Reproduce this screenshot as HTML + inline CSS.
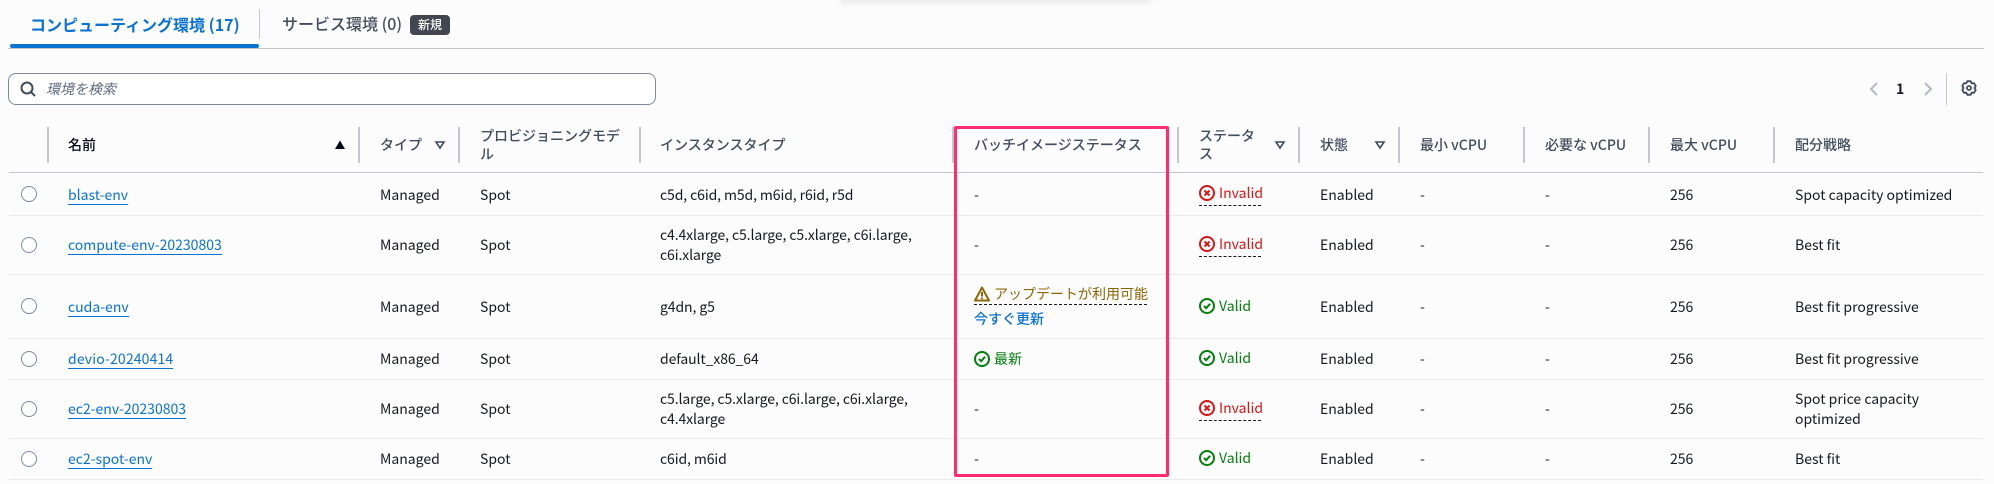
<!DOCTYPE html>
<html lang="ja">
<head>
<meta charset="utf-8">
<title>コンピューティング環境</title>
<style>
html,body{margin:0;padding:0;background:#fcfcfc}
body{position:relative;width:1994px;height:484px;overflow:hidden;font-family:"Noto Sans CJK JP","Liberation Sans",sans-serif;font-size:14px;color:#16191f}
.a,.t,.h,.l,.hr,.sep{position:absolute}
.t{line-height:22px;white-space:nowrap}
.i{line-height:20px;letter-spacing:-.1px}
.h{line-height:18px;white-space:nowrap;color:#414d5c;font-weight:500;font-size:14px}
.l{line-height:18px;white-space:nowrap;color:#0972d3;border-bottom:1px solid #0972d3}
.hr{left:9px;width:1974px;height:1px;background:#e9ebed}
.sep{top:127px;width:2px;height:36px;background:#c6c6cd}
.r{position:absolute;left:21px;width:14px;height:14px;border:1px solid #7d8998;border-radius:50%;background:#fff}
svg{position:absolute;overflow:visible;fill:none}
.neg{color:#d91515}.pos{color:#037f0c}
.d{position:absolute;height:0;border-bottom:1px dashed #16191f}
</style>
</head>
<body>
<div class="a" style="left:840px;top:-8px;width:310px;height:8px;background:#fcfcfc;box-shadow:0 2px 8px rgba(0,0,0,.1)"></div>

<div class="t" style="left:30px;top:13px;font-size:16px;font-weight:700;color:#0972d3">コンピューティング環境 (17)</div>
<div class="a" style="left:10px;top:44px;width:249px;height:4px;background:#0972d3;border-radius:2px"></div>
<div class="a" style="left:8px;top:48px;width:1976px;height:1px;background:#c6c6cd"></div>
<div class="a" style="left:259px;top:9px;width:1px;height:30px;background:#c6c6cd"></div>
<div class="t" style="left:282px;top:12px;font-size:16px;font-weight:500;color:#414d5c">サービス環境 (0)</div>
<div class="a" style="left:410px;top:15px;width:40px;height:20px;background:#424650;border-radius:4px;color:#fff;font-size:12px;font-weight:500;line-height:20px;text-align:center">新規</div>

<div class="a" style="left:8px;top:73px;width:646px;height:30px;border:1px solid #7d8998;border-radius:8px;background:#fff"></div>
<svg style="left:20px;top:81px" width="16" height="16" viewBox="0 0 16 16" stroke="#414d5c" stroke-width="2"><circle cx="7" cy="7" r="5.5"/><path d="m11 11 4 4"/></svg>
<div class="t" style="left:46px;top:78px;font-style:italic;color:#5f6b7a;font-size:14px">環境を検索</div>

<svg style="left:1866px;top:81px" width="16" height="16" viewBox="0 0 16 16" stroke="#b4bac4" stroke-width="2"><path d="M11 2 5 8l6 6"/></svg>
<div class="t" style="left:1896px;top:78px;font-weight:700;color:#16191f">1</div>
<svg style="left:1920px;top:81px" width="16" height="16" viewBox="0 0 16 16" stroke="#b4bac4" stroke-width="2"><path d="m5 2 6 6-6 6"/></svg>
<div class="a" style="left:1946px;top:73px;width:1px;height:32px;background:#c6c6cd"></div>
<svg style="left:1961px;top:80px" width="16" height="16" viewBox="0 0 16 16" stroke="#414d5c" stroke-width="1.8" stroke-linejoin="round"><path d="M6.3 1.2H9.700L10.700 3.320 13.040 3.140 14.730 6.070 13.400 8 14.730 9.930 13.040 12.860 10.700 12.680 9.700 14.800H6.300L5.300 12.680 2.960 12.860 1.270 9.930 2.600 8 1.270 6.070 2.960 3.140 5.300 3.320Z"/><circle cx="8" cy="8" r="2"/></svg>

<div class="sep" style="left:47px"></div>
<div class="sep" style="left:358px"></div>
<div class="sep" style="left:458px"></div>
<div class="sep" style="left:639px"></div>
<div class="sep" style="left:952px"></div>
<div class="sep" style="left:1177px"></div>
<div class="sep" style="left:1298px"></div>
<div class="sep" style="left:1398px"></div>
<div class="sep" style="left:1523px"></div>
<div class="sep" style="left:1648px"></div>
<div class="sep" style="left:1773px"></div>

<div class="h" style="left:68px;top:136px;color:#000716">名前</div>
<div class="h" style="left:380px;top:136px">タイプ</div>
<div class="h" style="left:480px;top:127px">プロビジョニングモデ<br>ル</div>
<div class="h" style="left:660px;top:136px">インスタンスタイプ</div>
<div class="h" style="left:974px;top:136px">バッチイメージステータス</div>
<div class="h" style="left:1199px;top:127px">ステータ<br>ス</div>
<div class="h" style="left:1320px;top:136px">状態</div>
<div class="h" style="left:1420px;top:136px">最小 vCPU</div>
<div class="h" style="left:1545px;top:136px">必要な vCPU</div>
<div class="h" style="left:1670px;top:136px">最大 vCPU</div>
<div class="h" style="left:1795px;top:136px">配分戦略</div>

<svg style="left:334px;top:140px" width="12" height="10" viewBox="0 0 12 10"><path d="M6 .5 11 9H1z" fill="#000716"/></svg>
<svg style="left:435px;top:141px" width="10" height="8" viewBox="0 0 10 8" stroke="#414d5c" stroke-width="1.6"><path d="M1 1h8L5 7z"/></svg>
<svg style="left:1275px;top:141px" width="10" height="8" viewBox="0 0 10 8" stroke="#414d5c" stroke-width="1.6"><path d="M1 1h8L5 7z"/></svg>
<svg style="left:1375px;top:141px" width="10" height="8" viewBox="0 0 10 8" stroke="#414d5c" stroke-width="1.6"><path d="M1 1h8L5 7z"/></svg>

<div class="hr" style="top:172px;background:#c6c6cd"></div>
<div class="hr" style="top:215px"></div>
<div class="hr" style="top:274px"></div>
<div class="hr" style="top:338px"></div>
<div class="hr" style="top:379px"></div>
<div class="hr" style="top:438px"></div>
<div class="hr" style="top:479px"></div>

<div class="r" style="top:186px"></div>
<div class="r" style="top:237px"></div>
<div class="r" style="top:298px"></div>
<div class="r" style="top:351px"></div>
<div class="r" style="top:401px"></div>
<div class="r" style="top:451px"></div>

<!-- Row 1 -->
<div class="l" style="left:68px;top:186px">blast-env</div>
<div class="t" style="left:380px;top:184px">Managed</div>
<div class="t" style="left:480px;top:184px">Spot</div>
<div class="t i" style="left:660px;top:185px">c5d, c6id, m5d, m6id, r6id, r5d</div>
<div class="t" style="left:974px;top:184px">-</div>
<svg style="left:1199px;top:185px" width="16" height="16" viewBox="0 0 16 16" stroke="#d91515" stroke-width="2"><circle cx="8" cy="8" r="7"/><path d="m10.5 5.500-5 5M10.500 10.500l-5-5"/></svg>
<div class="t neg" style="left:1219px;top:182px">Invalid</div>
<div class="d" style="left:1199px;top:205px;width:62px"></div>
<div class="t" style="left:1320px;top:184px">Enabled</div>
<div class="t" style="left:1420px;top:184px">-</div>
<div class="t" style="left:1545px;top:184px">-</div>
<div class="t" style="left:1670px;top:184px">256</div>
<div class="t" style="left:1795px;top:184px">Spot capacity optimized</div>

<!-- Row 2 -->
<div class="l" style="left:68px;top:236px">compute-env-20230803</div>
<div class="t" style="left:380px;top:234px">Managed</div>
<div class="t" style="left:480px;top:234px">Spot</div>
<div class="t i" style="left:660px;top:225px">c4.4xlarge, c5.large, c5.xlarge, c6i.large,<br>c6i.xlarge</div>
<div class="t" style="left:974px;top:234px">-</div>
<svg style="left:1199px;top:236px" width="16" height="16" viewBox="0 0 16 16" stroke="#d91515" stroke-width="2"><circle cx="8" cy="8" r="7"/><path d="m10.500 5.500-5 5M10.500 10.500l-5-5"/></svg>
<div class="t neg" style="left:1219px;top:233px">Invalid</div>
<div class="d" style="left:1199px;top:256px;width:62px"></div>
<div class="t" style="left:1320px;top:234px">Enabled</div>
<div class="t" style="left:1420px;top:234px">-</div>
<div class="t" style="left:1545px;top:234px">-</div>
<div class="t" style="left:1670px;top:234px">256</div>
<div class="t" style="left:1795px;top:234px">Best fit</div>

<!-- Row 3 -->
<div class="l" style="left:68px;top:298px">cuda-env</div>
<div class="t" style="left:380px;top:296px">Managed</div>
<div class="t" style="left:480px;top:296px">Spot</div>
<div class="t i" style="left:660px;top:297px">g4dn, g5</div>
<svg style="left:974px;top:286px" width="16" height="16" viewBox="0 0 16 16" stroke="#8d6605" stroke-width="2" stroke-linejoin="round"><path d="M8 1.500 15 14.500H1zM8 6v4.500M8 11.500v1.500"/></svg>
<div class="t" style="left:994px;top:283px;color:#8d6605">アップデートが利用可能</div>
<div class="d" style="left:974px;top:304px;width:173px"></div>
<div class="t" style="left:974px;top:308px;color:#0972d3;font-weight:500">今すぐ更新</div>
<svg style="left:1199px;top:298px" width="16" height="16" viewBox="0 0 16 16" stroke="#037f0c" stroke-width="2"><circle cx="8" cy="8" r="7"/><path d="m5 8 2.200 2.200L11 5.800"/></svg>
<div class="t pos" style="left:1219px;top:295px">Valid</div>
<div class="t" style="left:1320px;top:296px">Enabled</div>
<div class="t" style="left:1420px;top:296px">-</div>
<div class="t" style="left:1545px;top:296px">-</div>
<div class="t" style="left:1670px;top:296px">256</div>
<div class="t" style="left:1795px;top:296px">Best fit progressive</div>

<!-- Row 4 -->
<div class="l" style="left:68px;top:350px;letter-spacing:.15px">devio-20240414</div>
<div class="t" style="left:380px;top:348px">Managed</div>
<div class="t" style="left:480px;top:348px">Spot</div>
<div class="t i" style="left:660px;top:349px">default_x86_64</div>
<svg style="left:974px;top:351px" width="16" height="16" viewBox="0 0 16 16" stroke="#037f0c" stroke-width="2"><circle cx="8" cy="8" r="7"/><path d="m5 8 2.200 2.200L11 5.800"/></svg>
<div class="t pos" style="left:994px;top:348px">最新</div>
<svg style="left:1199px;top:350px" width="16" height="16" viewBox="0 0 16 16" stroke="#037f0c" stroke-width="2"><circle cx="8" cy="8" r="7"/><path d="m5 8 2.200 2.200L11 5.800"/></svg>
<div class="t pos" style="left:1219px;top:347px">Valid</div>
<div class="t" style="left:1320px;top:348px">Enabled</div>
<div class="t" style="left:1420px;top:348px">-</div>
<div class="t" style="left:1545px;top:348px">-</div>
<div class="t" style="left:1670px;top:348px">256</div>
<div class="t" style="left:1795px;top:348px">Best fit progressive</div>

<!-- Row 5 -->
<div class="l" style="left:68px;top:400px">ec2-env-20230803</div>
<div class="t" style="left:380px;top:398px">Managed</div>
<div class="t" style="left:480px;top:398px">Spot</div>
<div class="t i" style="left:660px;top:389px">c5.large, c5.xlarge, c6i.large, c6i.xlarge,<br>c4.4xlarge</div>
<div class="t" style="left:974px;top:398px">-</div>
<svg style="left:1199px;top:400px" width="16" height="16" viewBox="0 0 16 16" stroke="#d91515" stroke-width="2"><circle cx="8" cy="8" r="7"/><path d="m10.500 5.500-5 5M10.500 10.500l-5-5"/></svg>
<div class="t neg" style="left:1219px;top:397px">Invalid</div>
<div class="d" style="left:1199px;top:420px;width:62px"></div>
<div class="t" style="left:1320px;top:398px">Enabled</div>
<div class="t" style="left:1420px;top:398px">-</div>
<div class="t" style="left:1545px;top:398px">-</div>
<div class="t" style="left:1670px;top:398px">256</div>
<div class="t i" style="left:1795px;top:389px;letter-spacing:0">Spot price capacity<br>optimized</div>

<!-- Row 6 -->
<div class="l" style="left:68px;top:450px">ec2-spot-env</div>
<div class="t" style="left:380px;top:448px">Managed</div>
<div class="t" style="left:480px;top:448px">Spot</div>
<div class="t i" style="left:660px;top:449px">c6id, m6id</div>
<div class="t" style="left:974px;top:448px">-</div>
<svg style="left:1199px;top:450px" width="16" height="16" viewBox="0 0 16 16" stroke="#037f0c" stroke-width="2"><circle cx="8" cy="8" r="7"/><path d="m5 8 2.200 2.200L11 5.800"/></svg>
<div class="t pos" style="left:1219px;top:447px">Valid</div>
<div class="t" style="left:1320px;top:448px">Enabled</div>
<div class="t" style="left:1420px;top:448px">-</div>
<div class="t" style="left:1545px;top:448px">-</div>
<div class="t" style="left:1670px;top:448px">256</div>
<div class="t" style="left:1795px;top:448px">Best fit</div>

<div class="a" style="left:954px;top:126px;width:209px;height:345px;border:3px solid #ff2d6f;border-radius:2px"></div>
</body>
</html>
